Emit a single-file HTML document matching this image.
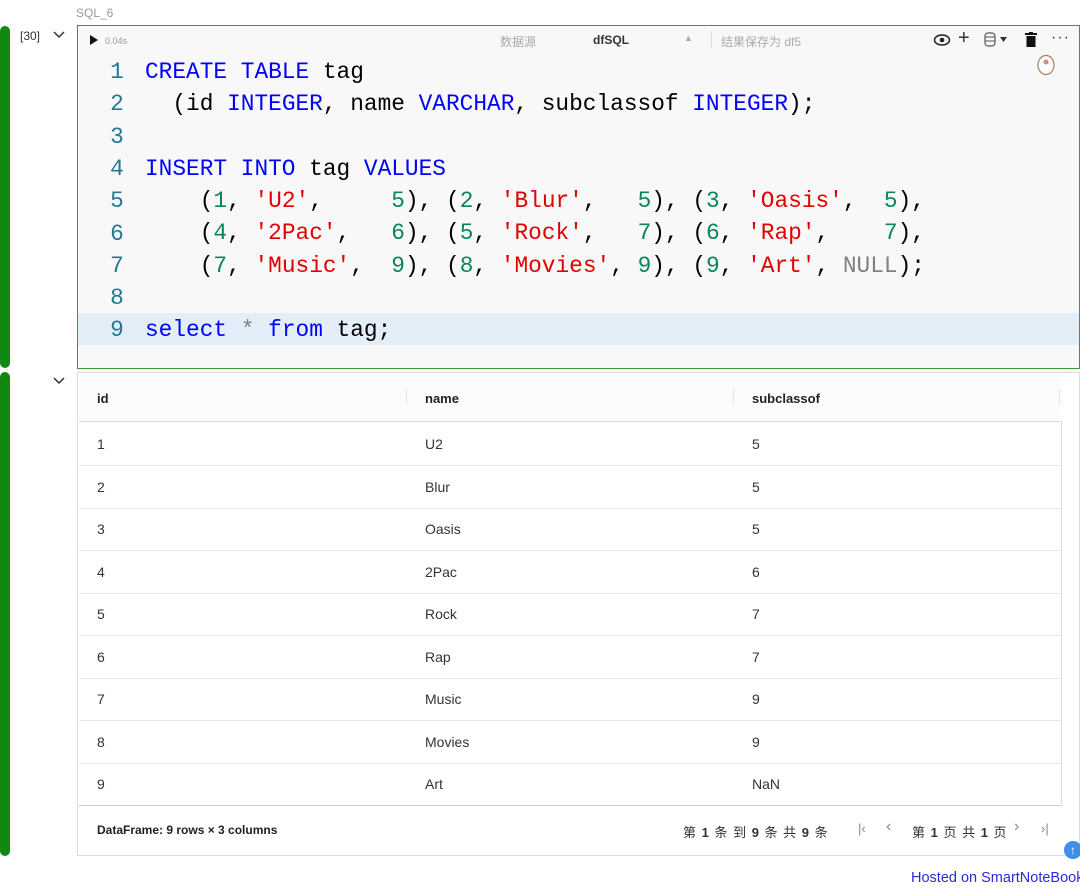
<!DOCTYPE html>
<html><head><meta charset="utf-8"><style>
body{margin:0;width:1080px;height:890px;background:#fff;font-family:"Liberation Sans","Noto Sans CJK SC",sans-serif;position:relative;overflow:hidden}
.abs{position:absolute;white-space:nowrap}
.bar{position:absolute;left:0;width:10px;background:#118811;border-radius:5px}
.code{font-family:"Liberation Mono","DejaVu Sans Mono",monospace;font-size:22.8px;white-space:pre;line-height:32.3px}
.k{color:#0000ff}.s{color:#e00000}.n{color:#098658}.g{color:#808080}
.ln{position:absolute;left:100px;width:34px;text-align:center;color:#237893}
.row{position:absolute;left:79px;width:983px;height:42px;border-bottom:1px solid #e6e6e6;font-size:14px;color:#333}
.row span{position:absolute;top:13px}
</style></head><body>
<div class="abs" style="left:76px;top:6px;font-size:12px;color:#999">SQL_6</div>
<div class="bar" style="top:26px;height:342px"></div>
<div class="bar" style="top:372px;height:484px"></div>
<div class="abs" style="left:20px;top:29px;font-size:12px;color:#333">[30]</div>
<svg class="abs" style="left:53px;top:31px" width="12" height="8"><path d="M1 1L6 6L11 1" stroke="#333" stroke-width="1.5" fill="none"/></svg>
<svg class="abs" style="left:53px;top:377px" width="12" height="8"><path d="M1 1L6 6L11 1" stroke="#333" stroke-width="1.5" fill="none"/></svg>
<div class="abs" style="left:77px;top:25px;width:1001px;height:342px;border:1px solid #3a9a3a;background:#f8f8f8"></div>
<div class="abs" style="left:78px;top:313px;width:1001px;height:32px;background:#e3eef8"></div>
<svg class="abs" style="left:90px;top:35px" width="8" height="10"><path d="M0 0L8 5L0 10Z" fill="#111"/></svg>
<div class="abs" style="left:105px;top:36px;font-size:9px;color:#999">0.04s</div>
<div class="abs" style="left:500px;top:33px;font-size:12px;color:#aaa">数据源</div>
<div class="abs" style="left:593px;top:33px;font-size:12px;color:#333;font-weight:bold">dfSQL</div>
<div class="abs" style="left:684px;top:33px;font-size:9px;color:#aaa">▲</div>
<div class="abs" style="left:711px;top:31px;width:1px;height:18px;background:#ddd"></div>
<div class="abs" style="left:721px;top:33px;font-size:12px;color:#aaa">结果保存为 df5</div>
<svg class="abs" style="left:933px;top:33px" width="18" height="14"><ellipse cx="9" cy="7" rx="7.5" ry="5" fill="none" stroke="#222" stroke-width="1.5"/><circle cx="9" cy="7" r="2.3" fill="#222"/></svg>
<div class="abs" style="left:958px;top:27px;font-size:20px;color:#333">+</div>
<svg class="abs" style="left:984px;top:32px" width="24" height="16"><rect x="1" y="1" width="10" height="13" rx="3" fill="none" stroke="#555" stroke-width="1.2"/><path d="M1 5H11M1 9H11" stroke="#555"/><path d="M16 5L23 5L19.5 10Z" fill="#333"/></svg>
<svg class="abs" style="left:1025px;top:32px" width="12" height="15"><rect x="0" y="1" width="12" height="2" fill="#111"/><rect x="4" y="0" width="4" height="2" fill="#111"/><rect x="1.5" y="4" width="9" height="11" fill="#111"/></svg>
<div class="abs" style="left:1051px;top:29px;font-size:16px;color:#444;letter-spacing:1px">···</div>
<svg class="abs" style="left:1036px;top:54px" width="20" height="22"><ellipse cx="10" cy="11" rx="8" ry="9.5" fill="#fff" stroke="#b07a5a" stroke-width="1.2"/><circle cx="10" cy="8" r="2.5" fill="#c0392b" opacity=".6"/></svg>
<div class="code abs" style="left:0;top:56px">
<div class="ln" style="top:0">1</div><div class="ln" style="top:32.3px">2</div><div class="ln" style="top:64.6px">3</div><div class="ln" style="top:96.9px">4</div><div class="ln" style="top:129.2px">5</div><div class="ln" style="top:161.5px">6</div><div class="ln" style="top:193.8px">7</div><div class="ln" style="top:226.1px">8</div><div class="ln" style="top:258.4px">9</div>
<div style="position:absolute;left:145px;top:0"><span class="k">CREATE TABLE</span> tag
  (id <span class="k">INTEGER</span>, name <span class="k">VARCHAR</span>, subclassof <span class="k">INTEGER</span>);

<span class="k">INSERT INTO</span> tag <span class="k">VALUES</span>
    (<span class="n">1</span>, <span class="s">'U2'</span>,     <span class="n">5</span>), (<span class="n">2</span>, <span class="s">'Blur'</span>,   <span class="n">5</span>), (<span class="n">3</span>, <span class="s">'Oasis'</span>,  <span class="n">5</span>),
    (<span class="n">4</span>, <span class="s">'2Pac'</span>,   <span class="n">6</span>), (<span class="n">5</span>, <span class="s">'Rock'</span>,   <span class="n">7</span>), (<span class="n">6</span>, <span class="s">'Rap'</span>,    <span class="n">7</span>),
    (<span class="n">7</span>, <span class="s">'Music'</span>,  <span class="n">9</span>), (<span class="n">8</span>, <span class="s">'Movies'</span>, <span class="n">9</span>), (<span class="n">9</span>, <span class="s">'Art'</span>, <span class="g">NULL</span>);

<span class="k">select</span> <span class="g">*</span> <span class="k">from</span> tag;</div></div>
<div class="abs" style="left:77px;top:372px;width:1001px;height:482px;border:1px solid #ddd"></div>
<div class="abs" style="left:1061px;top:373px;width:1px;height:431px;background:#ddd"></div>
<div class="abs" style="left:79px;top:373px;width:983px;height:48px;background:#fcfcfc;border-bottom:1px solid #ddd;font-size:13px;font-weight:bold;color:#222">
<span class="abs" style="left:18px;top:18px">id</span><span class="abs" style="left:346px;top:18px">name</span><span class="abs" style="left:673px;top:18px">subclassof</span>
<div class="abs" style="left:327px;top:16px;width:1px;height:16px;background:#e5e5e5"></div><div class="abs" style="left:654px;top:16px;width:1px;height:16px;background:#e5e5e5"></div><div class="abs" style="left:980px;top:16px;width:1px;height:16px;background:#e5e5e5"></div></div>
<div class="row" style="top:423px"><span style="left:18px">1</span><span style="left:346px">U2</span><span style="left:673px">5</span></div>
<div class="row" style="top:466px"><span style="left:18px">2</span><span style="left:346px">Blur</span><span style="left:673px">5</span></div>
<div class="row" style="top:508px"><span style="left:18px">3</span><span style="left:346px">Oasis</span><span style="left:673px">5</span></div>
<div class="row" style="top:551px"><span style="left:18px">4</span><span style="left:346px">2Pac</span><span style="left:673px">6</span></div>
<div class="row" style="top:593px"><span style="left:18px">5</span><span style="left:346px">Rock</span><span style="left:673px">7</span></div>
<div class="row" style="top:636px"><span style="left:18px">6</span><span style="left:346px">Rap</span><span style="left:673px">7</span></div>
<div class="row" style="top:678px"><span style="left:18px">7</span><span style="left:346px">Music</span><span style="left:673px">9</span></div>
<div class="row" style="top:721px"><span style="left:18px">8</span><span style="left:346px">Movies</span><span style="left:673px">9</span></div>
<div class="row" style="top:763px;border-bottom:1px solid #ccc"><span style="left:18px">9</span><span style="left:346px">Art</span><span style="left:673px">NaN</span></div>
<div class="abs" style="left:97px;top:823px;font-size:12px;font-weight:bold;color:#222">DataFrame: 9 rows × 3 columns</div>
<div class="abs" style="left:683px;top:822px;font-size:13px;color:#333;letter-spacing:1px">第 <b>1</b> 条 到 <b>9</b> 条 共 <b>9</b> 条</div>
<div class="abs" style="left:858px;top:821px;font-size:13px;color:#888">|‹</div>
<div class="abs" style="left:886px;top:818px;font-size:16px;color:#888">‹</div>
<div class="abs" style="left:912px;top:822px;font-size:13px;color:#333;letter-spacing:1px">第 <b>1</b> 页 共 <b>1</b> 页</div>
<div class="abs" style="left:1014px;top:818px;font-size:16px;color:#888">›</div>
<div class="abs" style="left:1041px;top:821px;font-size:13px;color:#888">›|</div>
<div class="abs" style="left:1064px;top:841px;width:18px;height:18px;border-radius:50%;background:#3d8fe8;color:#fff;font-size:12px;text-align:center;line-height:18px">↑</div>
<div class="abs" style="left:911px;top:870px;font-size:14.5px;color:#2b2bd6">Hosted on SmartNoteBook</div>
</body></html>
